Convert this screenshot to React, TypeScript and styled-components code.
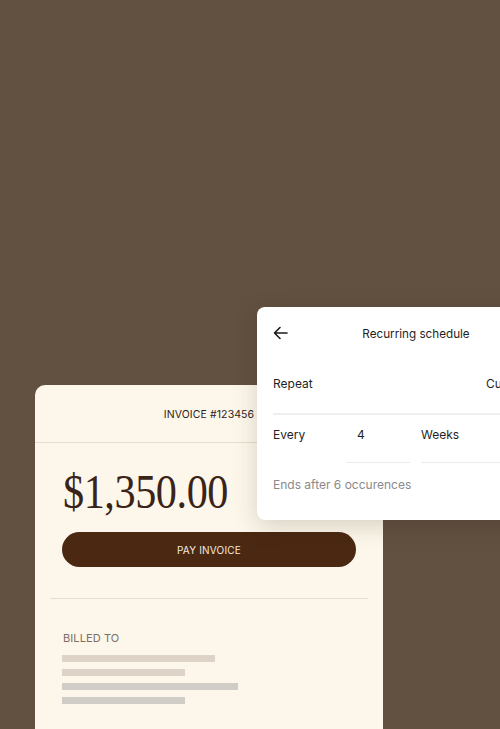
import React from "react";
import styled, { createGlobalStyle } from "styled-components";

const Global = createGlobalStyle`
  html, body { margin: 0; padding: 0; background: #625041; }
  * { box-sizing: border-box; }
`;

const Canvas = styled.div`
  position: relative;
  width: 500px;
  height: 729px;
  overflow: hidden;
  background: #625041;
  padding: 385px 0 0 35px;
  font-family: Inter, "Noto Sans", sans-serif;
`;

const InvoiceCard = styled.section`
  width: 348px;
  height: 400px;
  background: #fdf7eb;
  border-radius: 10px 10px 0 0;
  display: flex;
  flex-direction: column;
`;

const InvoiceHeader = styled.header`
  height: 58px;
  display: flex;
  align-items: center;
  justify-content: center;
  border-bottom: 1.5px solid #e8ddcc;
  font-size: 10.5px;
  letter-spacing: 0.1px;
  color: #2e221a;
  padding-top: 1px;
`;

const InvoiceBody = styled.div`
  display: flex;
  flex-direction: column;
  padding: 0 15px;
`;

const Amount = styled.div`
  font-family: "Liberation Serif", "Times New Roman", serif;
  font-size: 48px;
  line-height: 1;
  letter-spacing: -0.5px;
  color: #3a2419;
  transform: scaleX(0.88);
  transform-origin: left center;
  margin: 25px 0 0 13px;
  height: 50px;
`;

const PayButton = styled.button`
  margin: 14px 12px 0 12px;
  height: 35px;
  border: none;
  border-radius: 18px;
  background: #4a2812;
  color: #f7eadf;
  font-family: Inter, "Noto Sans", sans-serif;
  font-size: 10px;
  letter-spacing: 0.2px;
  display: flex;
  align-items: center;
  justify-content: center;
`;

const Divider = styled.hr`
  margin: 31px 0 0 0;
  border: none;
  border-top: 1.5px solid #e8dece;
  width: 318px;
`;

const BilledLabel = styled.div`
  margin: 32px 0 0 13px;
  font-size: 11px;
  color: #7a6e66;
  letter-spacing: 0.1px;
`;

const Lines = styled.div`
  display: flex;
  flex-direction: column;
  gap: 7px;
  margin: 10px 0 0 12px;
`;

const Line = styled.div<{ $w: number; $tone: "tan" | "grey" }>`
  height: 7px;
  width: ${(p) => p.$w}px;
  background: ${(p) => (p.$tone === "tan" ? "#ddd3c6" : "#d0cdc8")};
`;

const Panel = styled.section`
  position: absolute;
  left: 257px;
  top: 307px;
  width: 314px;
  height: 213px;
  background: #ffffff;
  border-radius: 8px;
  box-shadow: 0 6px 24px rgba(40, 25, 10, 0.18);
  padding: 0 16px;
  display: flex;
  flex-direction: column;
  color: #1f1f1f;
  font-size: 12px;
`;

const PanelHeader = styled.header`
  position: relative;
  height: 54px;
  display: flex;
  align-items: center;
  justify-content: center;
`;

const BackButton = styled.span`
  position: absolute;
  left: 0;
  top: 19px;
  display: flex;
`;

const Title = styled.div`
  font-size: 11.7px;
  color: #1f1f1f;
  padding-left: 4px;
`;

const RepeatRow = styled.div`
  height: 54px;
  display: flex;
  align-items: flex-start;
  padding-top: 15px;
  border-bottom: 2px solid #efefef;
`;

const EveryRow = styled.div`
  display: flex;
  align-items: flex-start;
  height: 48px;
  padding-top: 12px;
`;

const RowLabel = styled.div<{ $w?: number }>`
  width: ${(p) => (p.$w ? `${p.$w}px` : "auto")};
  flex-shrink: 0;
`;

const Field = styled.div<{ $w: number; $pad: number }>`
  width: ${(p) => p.$w}px;
  height: 36px;
  padding-left: ${(p) => p.$pad}px;
  border-bottom: 1.5px solid #ececec;
  margin-right: 11px;
  flex-shrink: 0;
`;

const Hint = styled.div`
  margin-top: 14px;
  color: #8a8a8a;
  font-size: 12px;
`;

export default function App() {
  return (
    <>
      <Global />
      <Canvas>
        <InvoiceCard>
          <InvoiceHeader>INVOICE #123456</InvoiceHeader>
          <InvoiceBody>
            <Amount>$1,350.00</Amount>
            <PayButton>PAY INVOICE</PayButton>
            <Divider />
            <BilledLabel>BILLED TO</BilledLabel>
            <Lines>
              <Line $w={153} $tone="tan" />
              <Line $w={123} $tone="tan" />
              <Line $w={176} $tone="grey" />
              <Line $w={123} $tone="grey" />
            </Lines>
          </InvoiceBody>
        </InvoiceCard>
        <Panel>
          <PanelHeader>
            <BackButton>
              <svg width="15" height="14" viewBox="0 0 15 14" fill="none" stroke="#1a1a1a" strokeWidth="1.6" strokeLinecap="round" strokeLinejoin="round">
                <path d="M14 7H1.5M7 1.5L1.5 7L7 12.5" />
              </svg>
            </BackButton>
            <Title>Recurring schedule</Title>
          </PanelHeader>
          <RepeatRow>
            <RowLabel $w={213}>Repeat</RowLabel>
            <span>Custom</span>
          </RepeatRow>
          <EveryRow>
            <RowLabel $w={73}>Every</RowLabel>
            <Field $w={64} $pad={11}>4</Field>
            <Field $w={120} $pad={0}>Weeks</Field>
          </EveryRow>
          <Hint>Ends after 6 occurences</Hint>
        </Panel>
      </Canvas>
    </>
  );
}
